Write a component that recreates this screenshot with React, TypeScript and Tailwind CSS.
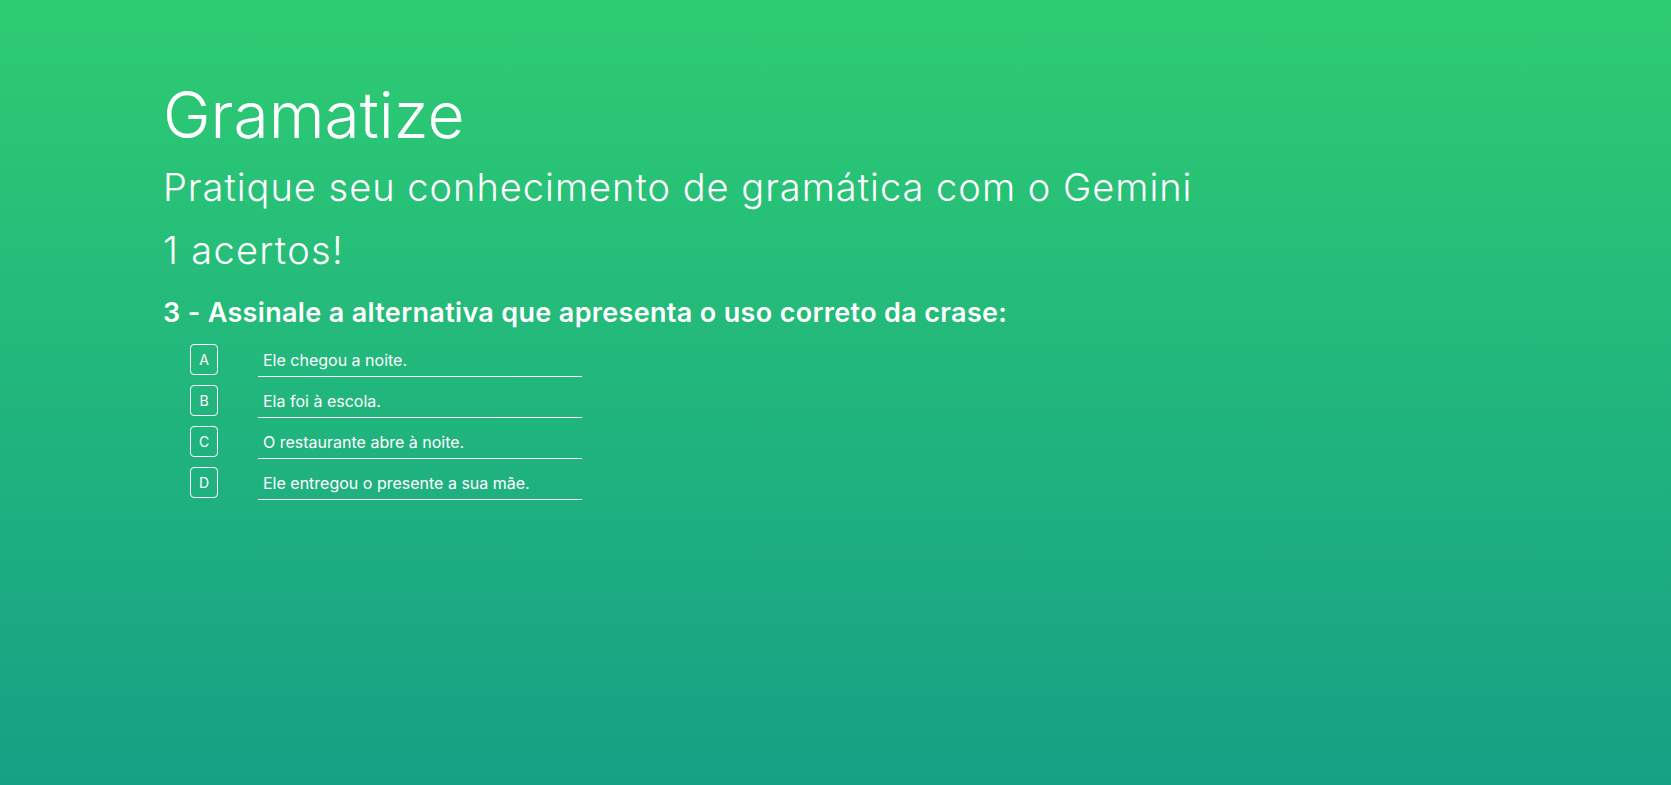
const options = [
  { letter: 'A', text: 'Ele chegou a noite.' },
  { letter: 'B', text: 'Ela foi à escola.' },
  { letter: 'C', text: 'O restaurante abre à noite.' },
  { letter: 'D', text: 'Ele entregou o presente a sua mãe.' },
]

function App() {
  return (
    <div className="min-h-screen w-full bg-gradient-to-b from-[#2ecc71] to-[#16a085] font-['Inter',_'Liberation_Sans',_sans-serif] text-white">
      <div className="flex flex-col pl-[163px] pt-[83px]">
        {/* Header */}
        <h1 className="text-[64px] font-light leading-none">Gramatize</h1>
        <h2 className="mt-[21px] text-[38px] font-light leading-none tracking-[1px]">
          Pratique seu conhecimento de gramática com o Gemini
        </h2>
        <p className="mt-[25px] text-[38px] font-light leading-none tracking-[1.3px]">1 acertos!</p>

        {/* Question */}
        <h3 className="mt-[30px] text-[27px] font-semibold leading-none tracking-[0.33px]">
          3 - Assinale a alternativa que apresenta o uso correto da crase:
        </h3>

        <ul className="mt-[18px] flex flex-col gap-[8px] pl-[27px]">
          {options.map((opt) => (
            <li key={opt.letter} className="flex items-start gap-[40px]">
              <span className="flex h-[31px] w-[28px] items-center justify-center rounded-[4px] border border-white text-[14px]">
                {opt.letter}
              </span>
              <button className="flex h-[33px] w-[324px] items-center border-b border-white px-[5px] text-left text-[16px]">
                {opt.text}
              </button>
            </li>
          ))}
        </ul>
      </div>
    </div>
  )
}

export default App
